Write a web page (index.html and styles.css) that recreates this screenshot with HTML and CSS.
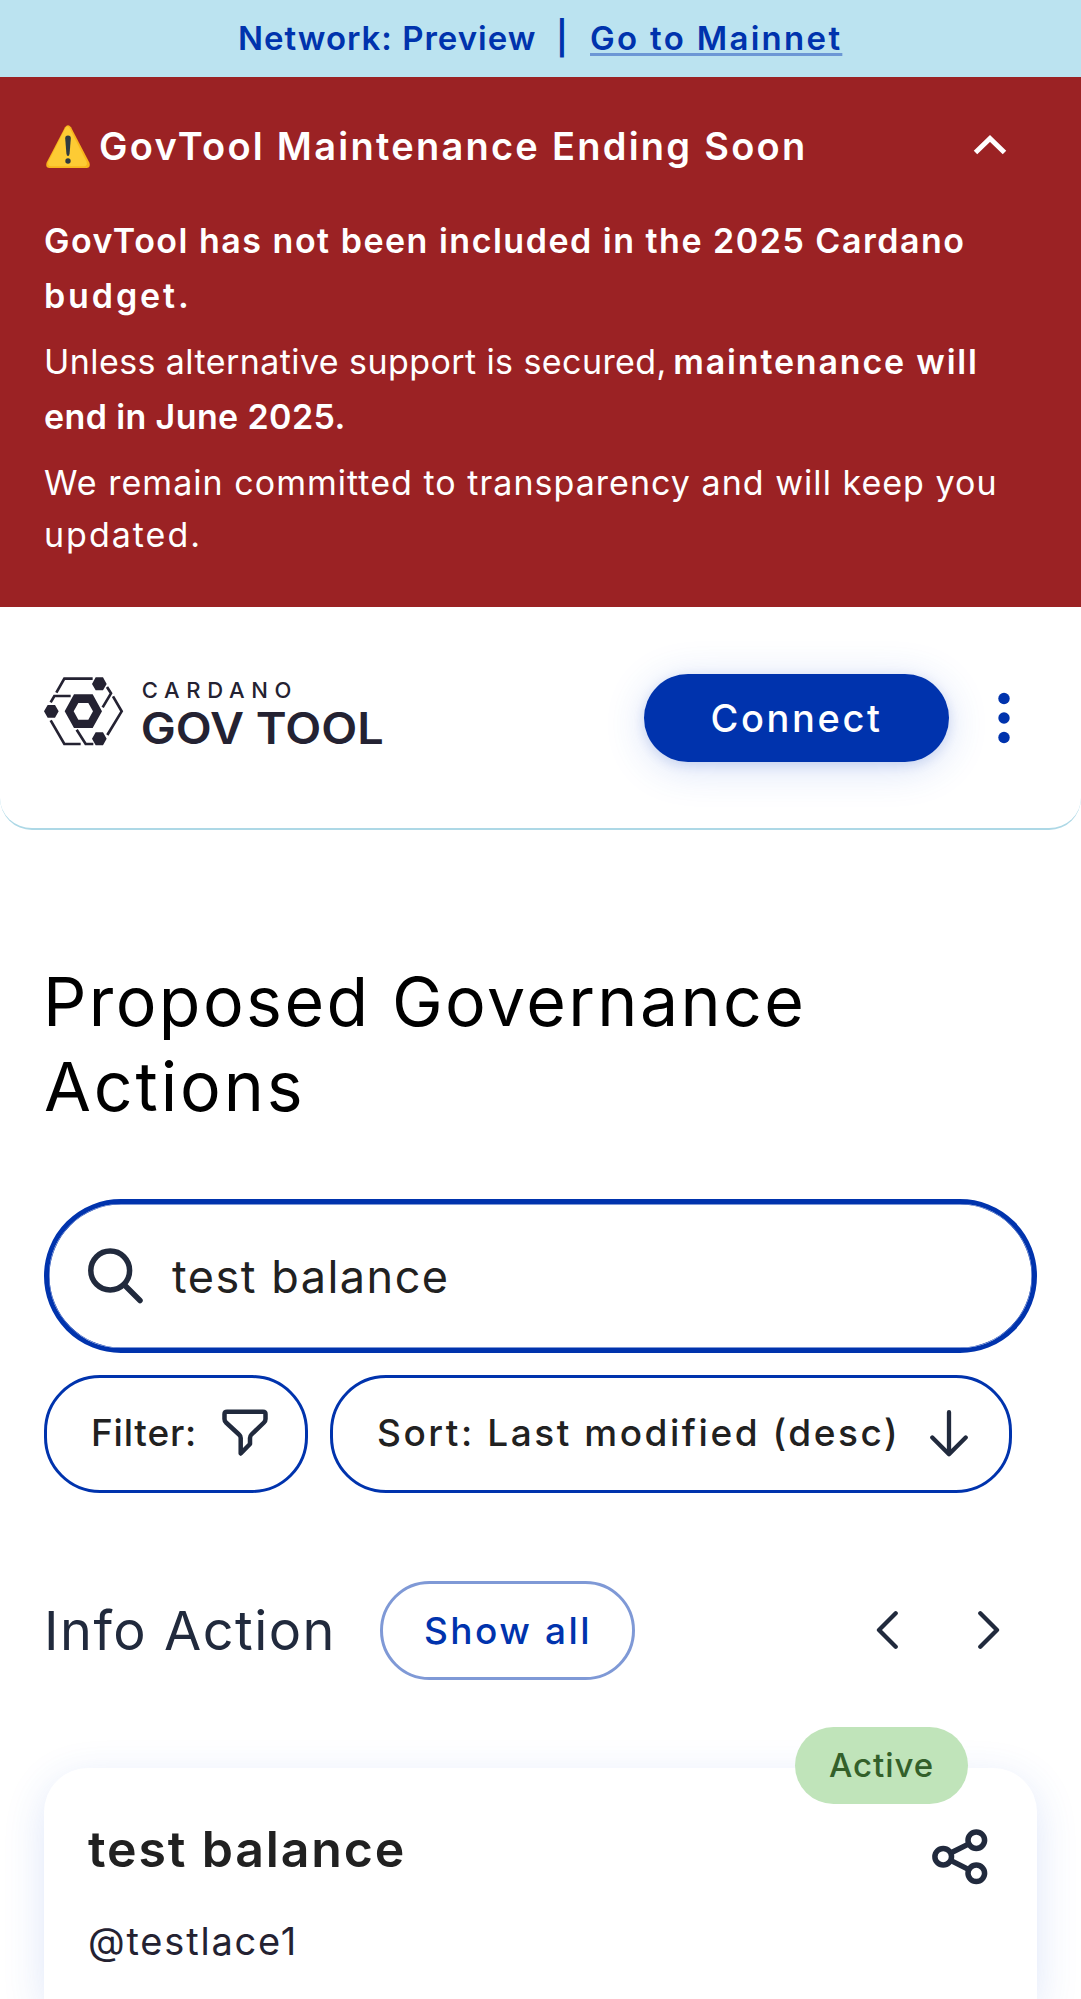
FILE: index.html
```html
<!DOCTYPE html>
<html lang="en">
<head>
<meta charset="utf-8">
<title>GovTool</title>
<link rel="stylesheet" href="styles.css">
</head>
<body>
<div class="network"><span class="net-label">Network: Preview</span><span class="net-sep">|</span><a class="net-link">Go to Mainnet</a></div>
<section class="alert">
  <div class="alert-head">
    <svg class="warn" viewBox="0 0 44 43"><path d="M19 2.200Q22 -1.500 25 2.200L43.300 37.500Q45 42.500 40.500 43H3.500Q-1 42.500 .7 37.500Z" fill="#f9b51c"/><path d="M19.500 3Q21.500 0 23.500 3L40.500 36.500Q42 41 38 41.300H5Q1 41 2.500 36.500Z" fill="#fdcb34"/><path d="M19.200 13.500Q19 10.500 22 10.500T24.800 13.500L23.600 28.500Q23.300 31 22 31T20.400 28.500Z" fill="#2f3a40"/><circle cx="22" cy="36" r="2.700" fill="#2f3a40"/></svg>
    <h2 class="alert-title">GovTool Maintenance Ending Soon</h2>
    <svg class="collapse" viewBox="0 0 34 22"><path d="M2.500 18.500L17 4.500L31.500 18.500" fill="none" stroke="#fff" stroke-width="5"/></svg>
  </div>
  <p class="strong"><span class="line-excluded">GovTool has not been included in the 2025 Cardano</span><br><span class="line-budget">budget.</span></p>
  <p class="mixed"><span class="line-unless">Unless alternative support is secured,</span> <b class="line-maintenance">maintenance will</b><br><b class="line-june">end in June 2025.</b></p>
  <p class="plain"><span class="line-remain">We remain committed to transparency and will keep you</span><br><span class="line-updated">updated.</span></p>
</section>
<header class="header">
  <svg class="logo" viewBox="42 50 1017 207">
    <g fill="none" stroke="#242232" stroke-width="8"><path d="M79 97L103 55H188M62 126L73 107H122M231 80L243 99L218 141M249 108L275 153L232 224M62 180L103 251H152M140 208L167 251H190"/></g>
    <g fill="#242232"><path d="M42 153L53 134H75L86 153L75 172H53ZM186 71L197 51H219L230 71L219 90H197ZM186 235L197 216H219L230 235L219 255H197Z"/><path fill-rule="evenodd" d="M104 153L132 102H188L216 153L188 203H132ZM131 153L145 178H175L189 153L175 128H145Z"/></g>
    <text class="logo-small" x="335" y="114" textLength="449">CARDANO</text>
    <text class="logo-big" x="332" y="252" textLength="729" lengthAdjust="spacingAndGlyphs">GOV TOOL</text>
  </svg>
  <button class="connect">Connect</button>
  <svg class="dots" viewBox="0 0 12 52"><g fill="#0033ad"><circle cx="6" cy="6.500" r="5.700"/><circle cx="6" cy="26" r="5.700"/><circle cx="6" cy="45.500" r="5.700"/></g></svg>
</header>
<main>
  <h1>Proposed Governance<br><span class="h1-second">Actions</span></h1>
  <div class="search">
    <svg class="magnifier" viewBox="0 0 56 56"><g fill="none" stroke="#212a3d" stroke-width="5.500" stroke-linecap="round"><circle cx="22.200" cy="22.500" r="19.400"/><path d="M36.500 37L52 52.500"/></g></svg>
    <span>test balance</span>
  </div>
  <div class="controls">
    <button class="pill filter"><span>Filter:</span><svg viewBox="0 0 46 47"><path d="M5 2.700H41Q43.500 2.700 43.500 5V10Q43.500 12 42 13.500L29.500 25.500Q28 27 28 29V35L18.700 44.500V29Q18.700 27 17 25.500L4 13.500Q2.500 12 2.500 10V5Q2.500 2.700 5 2.700Z" fill="none" stroke="#212a3d" stroke-width="4.500" stroke-linejoin="round"/></svg></button>
    <button class="pill sort"><span>Sort: Last modified (desc)</span><svg viewBox="0 0 38 47"><path d="M19 2.200V44M2.300 27.500L19 44.200L35.700 27.500" fill="none" stroke="#212a3d" stroke-width="4.300" stroke-linecap="round" stroke-linejoin="round"/></svg></button>
  </div>
  <div class="group">
    <h2>Info Action</h2>
    <button class="show">Show all</button>
    <svg class="prev" viewBox="0 0 22 38"><path d="M19.700 2.300L3 19L19.700 35.700" fill="none" stroke="#212a3d" stroke-width="4.300" stroke-linecap="round" stroke-linejoin="round"/></svg>
    <svg class="next" viewBox="0 0 22 38"><path d="M2.300 2.300L19 19L2.300 35.700" fill="none" stroke="#212a3d" stroke-width="4.300" stroke-linecap="round" stroke-linejoin="round"/></svg>
  </div>
  <article class="card">
    <span class="badge">Active</span>
    <div class="card-head">
      <h3>test balance</h3>
      <svg class="share" viewBox="0 0 56 56"><g fill="none" stroke="#212a3d" stroke-width="5.500"><circle cx="11.200" cy="27.700" r="8.300"/><circle cx="44.300" cy="11.200" r="8.300"/><circle cx="44.300" cy="44.300" r="8.300"/><path d="M18.600 24L36.900 14.900M18.600 31.400L36.900 40.600"/></g></svg>
    </div>
    <p>@testlace1</p>
  </article>
</main>
</body>
</html>
```
FILE: styles.css
```css
* { box-sizing: border-box; margin: 0; padding: 0; }
html { overflow: hidden; }
body { width: 1081px; height: 1999px; overflow: hidden; background: #fff; font-family: Inter, "Liberation Sans", sans-serif; color: #212121; white-space: nowrap; }
svg { display: block; flex: none; }
button { background: none; border: 0; font-family: inherit; color: inherit; }

.network { height: 77px; display: flex; padding-left: 238px; background: #bbe3f0; color: #0033ad; font-size: 33px; font-weight: 600; line-height: 76px; }
.net-label { width: 318px; letter-spacing: .98px; }
.net-sep { width: 34px; }
.net-link { height: 54px; letter-spacing: 2.3px; text-decoration: underline; text-decoration-color: #6c97d5; text-decoration-thickness: 3px; text-underline-offset: 3px; }

.alert { height: 530px; padding: 42px 44px 0; background: #9b2224; color: #fff; font-size: 34px; line-height: 55px; }
.alert-head { display: flex; align-items: center; height: 55px; margin-bottom: 38.5px; }
.warn { width: 44px; height: 43px; margin: 0 9px 0 2px; }
.alert-title { flex: 1; font-size: 38px; font-weight: 600; letter-spacing: 2.25px; }
.collapse { width: 34px; height: 22px; margin: 0 30px 3px 0; }
.strong { font-weight: 600; margin-bottom: 11.5px; }
.mixed { margin-bottom: 12.7px; }
.mixed b { font-weight: 600; }
.plain { line-height: 52px; }
.line-excluded { letter-spacing: 1.5px; }
.line-budget { letter-spacing: 2.9px; }
.line-unless { letter-spacing: .42px; }
.line-maintenance { margin-left: -3px; letter-spacing: 1.81px; }
.line-june { letter-spacing: .38px; }
.line-remain { letter-spacing: 1.03px; }
.line-updated { letter-spacing: 2px; }

.header { height: 223px; display: flex; align-items: center; padding: 0 71px 0 44px; border-bottom: 2px solid #add8e6; border-radius: 0 0 32px 32px; }
.logo { width: 339px; height: 69px; margin: 0 auto 13px 0; overflow: visible; }
.logo-small { font-size: 66px; font-weight: 500; fill: #242232; }
.logo-big { font-size: 131px; font-weight: 600; fill: #242232; }
.connect { width: 305px; height: 88px; border-radius: 44px; background: #0033ad; color: #fff; font-size: 38px; font-weight: 500; letter-spacing: 2.6px; box-shadow: 0 6px 40px rgba(47, 98, 220, .2), 0 3px 12px rgba(0, 51, 173, .14); }
.dots { width: 12px; height: 52px; margin-left: 49px; }

main { padding: 129px 44px 0; }
h1 { margin: 0 0 70px -1px; font-size: 68px; font-weight: 400; line-height: 85px; letter-spacing: 2.4px; color: #000; }
.h1-second { margin-left: 1px; letter-spacing: 2.9px; }
.search { height: 154px; display: flex; align-items: center; border: 5px solid #0033ad; border-radius: 77px; box-shadow: inset 0 0 0 .5px #0033ad; padding-left: 39px; font-size: 45px; letter-spacing: 1.5px; }
.magnifier { width: 56px; height: 56px; margin-right: 28px; }
.controls { display: flex; gap: 22px; margin-top: 22px; }
.pill { height: 118px; display: flex; align-items: center; border: 3px solid #0033ad; border-radius: 56px; font-size: 37px; font-weight: 500; }
.pill span { padding-bottom: 3px; }
.filter { width: 264px; padding-left: 44px; letter-spacing: .79px; }
.filter svg { width: 46px; height: 47px; margin: 0 37px 3px auto; }
.sort { width: 682px; padding-left: 44px; letter-spacing: 2.55px; }
.sort svg { width: 38px; height: 47px; margin: 0 41px 2px auto; }

.group { height: 100px; margin-top: 87px; display: flex; align-items: center; color: #212a3d; }
.group h2 { width: 336px; font-size: 54px; font-weight: 400; letter-spacing: 1.5px; }
.show { width: 255px; height: 99px; padding-left: 1px; border: 3px solid #7f99d6; border-radius: 50px; color: #0033ad; font-size: 37px; font-weight: 500; letter-spacing: 2.5px; }
.prev { width: 22px; height: 38px; margin-left: 241px; }
.next { width: 22px; height: 38px; margin-left: 80px; }

.card { position: relative; height: 231px; margin-top: 88px; padding: 56px 44px 0; border-radius: 44px 44px 0 0; background: #fff; box-shadow: 0 11px 42px rgba(47, 98, 220, .16); }
.badge { position: absolute; left: 751px; top: -41px; width: 173px; height: 77px; border-radius: 39px; background: #c0e4ba; color: #33602a; font-size: 33px; font-weight: 500; line-height: 76px; letter-spacing: .91px; text-align: center; }
.card-head { display: flex; justify-content: space-between; align-items: center; padding-right: 5px; height: 66px; }
.share { width: 56px; height: 56px; }
.card h3 { padding-bottom: 16px; font-size: 50px; font-weight: 600; letter-spacing: 1.85px; }
.card p { margin-top: 26px; font-size: 38px; line-height: 50px; letter-spacing: 1.8px; color: #242232; }
```
